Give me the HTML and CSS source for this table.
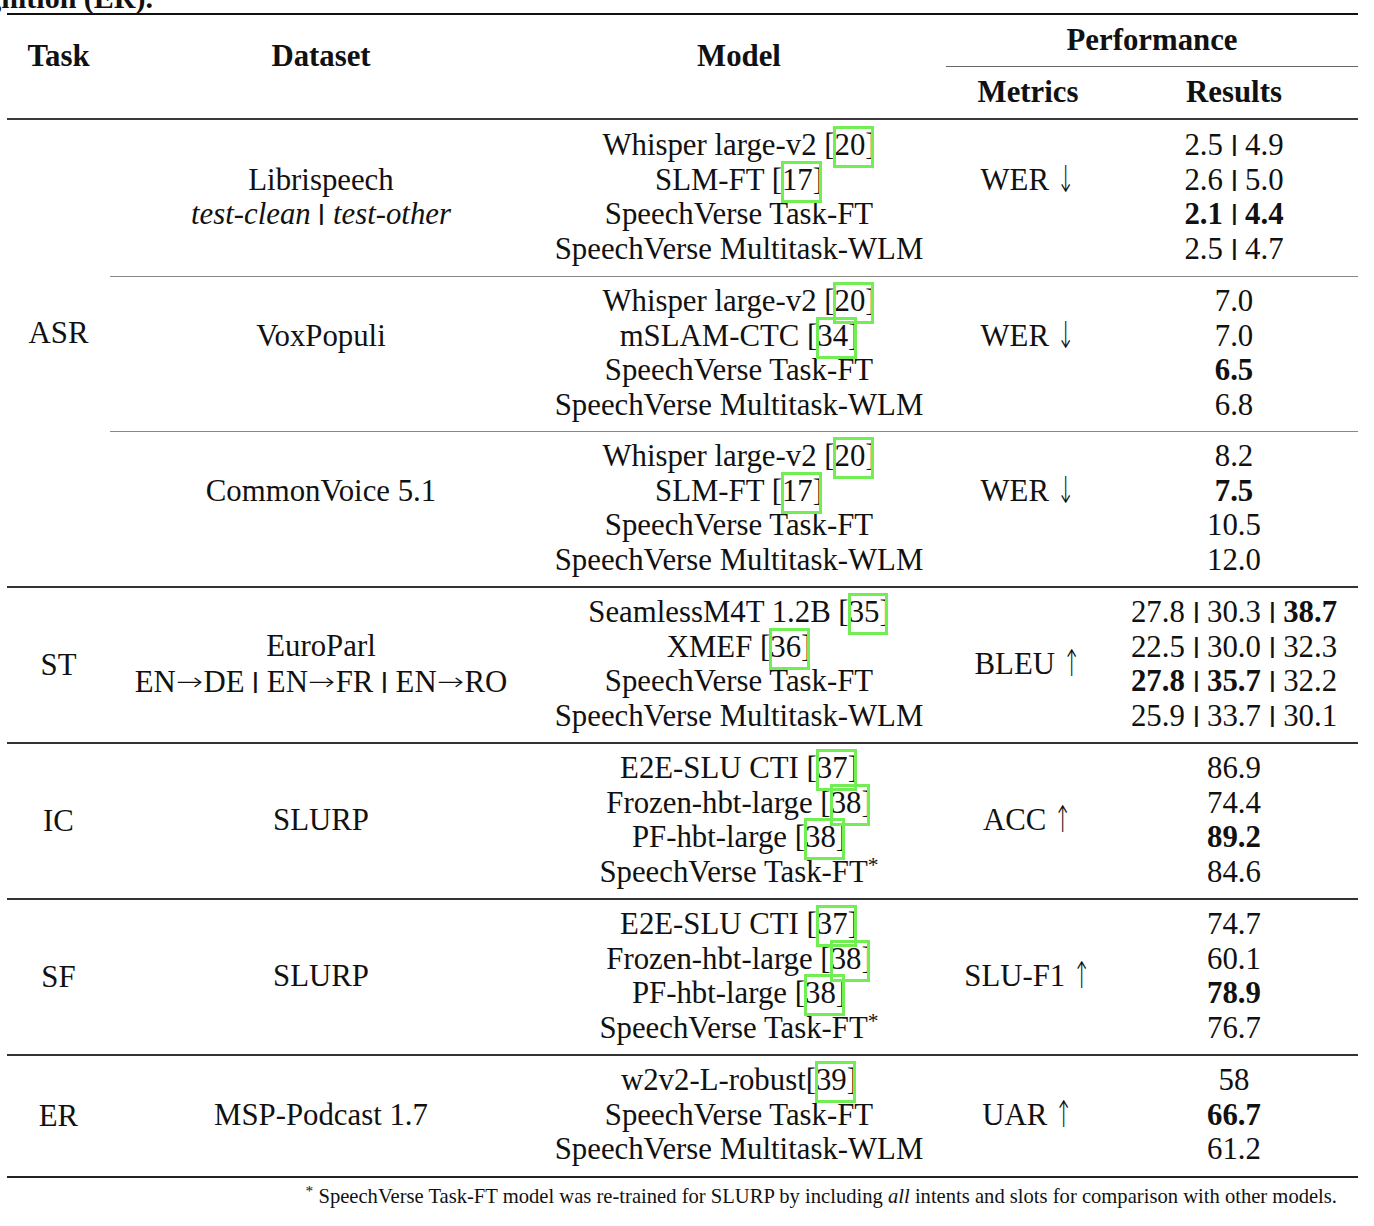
FILE: index.html
```html
<!DOCTYPE html>
<html lang="en">
<head>
<meta charset="utf-8">
<title>SpeechVerse results table</title>
<link rel="stylesheet" href="styles.css">
</head>
<body>
<div class="caption-clip"><div class="caption">Emotion Recognition (ER).</div></div>
<div class="tbl">
  <div class="hdr">
    <div class="h-task">Task</div>
    <div class="h-ds">Dataset</div>
    <div class="h-mdl">Model</div>
    <div class="h-perf">
      <div class="perf-top">Performance</div>
      <div class="perf-sub">
        <div class="h-met">Metrics</div>
        <div class="h-res">Results</div>
      </div>
    </div>
  </div>

  <div class="sec sec-first">
    <div class="task task-asr">ASR</div>
    <div class="groups">
      <div class="grp grp-first">
        <div class="ds"><div>Librispeech<br><i>test-clean</i> <span class="sep">|</span> <i>test-other</i></div></div>
        <div class="mdl">
          <div>Whisper large-v2 [<span class="cite">20</span>]</div>
          <div>SLM-FT [<span class="cite">17</span>]</div>
          <div>SpeechVerse Task-FT</div>
          <div>SpeechVerse Multitask-WLM</div>
        </div>
        <div class="met lift"><div>WER <span class="arr">↓</span></div></div>
        <div class="res">
          <div>2.5 <span class="sep">|</span> 4.9</div>
          <div>2.6 <span class="sep">|</span> 5.0</div>
          <div><b>2.1</b> <span class="sep">|</span> <b>4.4</b></div>
          <div>2.5 <span class="sep">|</span> 4.7</div>
        </div>
      </div>
      <div class="grp cmid">
        <div class="ds lift"><div>VoxPopuli</div></div>
        <div class="mdl">
          <div>Whisper large-v2 [<span class="cite">20</span>]</div>
          <div>mSLAM-CTC [<span class="cite">34</span>]</div>
          <div>SpeechVerse Task-FT</div>
          <div>SpeechVerse Multitask-WLM</div>
        </div>
        <div class="met lift"><div>WER <span class="arr">↓</span></div></div>
        <div class="res">
          <div>7.0</div>
          <div>7.0</div>
          <div><b>6.5</b></div>
          <div>6.8</div>
        </div>
      </div>
      <div class="grp cmid">
        <div class="ds lift"><div>CommonVoice 5.1</div></div>
        <div class="mdl">
          <div>Whisper large-v2 [<span class="cite">20</span>]</div>
          <div>SLM-FT [<span class="cite">17</span>]</div>
          <div>SpeechVerse Task-FT</div>
          <div>SpeechVerse Multitask-WLM</div>
        </div>
        <div class="met lift"><div>WER <span class="arr">↓</span></div></div>
        <div class="res">
          <div>8.2</div>
          <div><b>7.5</b></div>
          <div>10.5</div>
          <div>12.0</div>
        </div>
      </div>
    </div>
  </div>

  <div class="sec">
    <div class="task">ST</div>
    <div class="groups">
      <div class="grp">
        <div class="ds"><div>EuroParl<br>EN<span class="arr arr-h">→</span>DE <span class="sep">|</span> EN<span class="arr arr-h">→</span>FR <span class="sep">|</span> EN<span class="arr arr-h">→</span>RO</div></div>
        <div class="mdl">
          <div>SeamlessM4T 1.2B [<span class="cite">35</span>]</div>
          <div>XMEF [<span class="cite">36</span>]</div>
          <div>SpeechVerse Task-FT</div>
          <div>SpeechVerse Multitask-WLM</div>
        </div>
        <div class="met"><div>BLEU <span class="arr">↑</span></div></div>
        <div class="res">
          <div>27.8 <span class="sep">|</span> 30.3 <span class="sep">|</span> <b>38.7</b></div>
          <div>22.5 <span class="sep">|</span> 30.0 <span class="sep">|</span> 32.3</div>
          <div><b>27.8</b> <span class="sep">|</span> <b>35.7</b> <span class="sep">|</span> 32.2</div>
          <div>25.9 <span class="sep">|</span> 33.7 <span class="sep">|</span> 30.1</div>
        </div>
      </div>
    </div>
  </div>

  <div class="sec">
    <div class="task">IC</div>
    <div class="groups">
      <div class="grp">
        <div class="ds"><div>SLURP</div></div>
        <div class="mdl">
          <div>E2E-SLU CTI [<span class="cite">37</span>]</div>
          <div>Frozen-hbt-large [<span class="cite">38</span>]</div>
          <div>PF-hbt-large [<span class="cite">38</span>]</div>
          <div>SpeechVerse Task-FT<sup>*</sup></div>
        </div>
        <div class="met"><div>ACC <span class="arr">↑</span></div></div>
        <div class="res">
          <div>86.9</div>
          <div>74.4</div>
          <div><b>89.2</b></div>
          <div>84.6</div>
        </div>
      </div>
    </div>
  </div>

  <div class="sec">
    <div class="task">SF</div>
    <div class="groups">
      <div class="grp">
        <div class="ds"><div>SLURP</div></div>
        <div class="mdl">
          <div>E2E-SLU CTI [<span class="cite">37</span>]</div>
          <div>Frozen-hbt-large [<span class="cite">38</span>]</div>
          <div>PF-hbt-large [<span class="cite">38</span>]</div>
          <div>SpeechVerse Task-FT<sup>*</sup></div>
        </div>
        <div class="met"><div>SLU-F1 <span class="arr">↑</span></div></div>
        <div class="res">
          <div>74.7</div>
          <div>60.1</div>
          <div><b>78.9</b></div>
          <div>76.7</div>
        </div>
      </div>
    </div>
  </div>

  <div class="sec">
    <div class="task">ER</div>
    <div class="groups">
      <div class="grp">
        <div class="ds"><div>MSP-Podcast 1.7</div></div>
        <div class="mdl">
          <div>w2v2-L-robust[<span class="cite">39</span>]</div>
          <div>SpeechVerse Task-FT</div>
          <div>SpeechVerse Multitask-WLM</div>
        </div>
        <div class="met"><div>UAR <span class="arr">↑</span></div></div>
        <div class="res">
          <div>58</div>
          <div><b>66.7</b></div>
          <div>61.2</div>
        </div>
      </div>
    </div>
  </div>
</div>
<p class="foot"><sup>*</sup> SpeechVerse Task-FT model was re-trained for SLURP by including <i>all</i> intents and slots for comparison with other models.</p>
</body>
</html>
```

FILE: styles.css
```css
html, body {
  margin: 0;
  padding: 0;
  background: #fff;
}

body {
  font-family: "Liberation Serif", "Times New Roman", "DejaVu Serif", serif;
  font-size: 30.8px;
  color: #111;
  width: 1374px;
}

.caption-clip {
  height: 13px;
  width: 153px;
  overflow: hidden;
  display: flex;
  justify-content: flex-end;
  align-items: flex-start;
}

.caption {
  white-space: nowrap;
  font-weight: bold;
  font-size: 30px;
  line-height: 30px;
  margin-top: -17px;
  flex: none;
}

.tbl {
  margin-left: 7px;
  width: 1351px;
  border-top: 2px solid #111;
  border-bottom: 2px solid #222;
  line-height: 34.5px;
}

/* header */
.hdr {
  display: flex;
  height: 103px;
  font-weight: bold;
}

.h-task,
.h-ds,
.h-mdl {
  text-align: center;
  padding-top: 24px;
}

.h-task { width: 103px; }
.h-ds { width: 422px; }
.h-mdl { width: 414px; }

.h-perf {
  width: 412px;
  display: flex;
  flex-direction: column;
}

.perf-top {
  padding-top: 8px;
  height: 43px;
  text-align: center;
  border-bottom: 1px solid #666;
}

.perf-sub {
  display: flex;
  padding-top: 8px;
}

.h-met { width: 164px; text-align: center; }
.h-res { width: 248px; text-align: center; }

/* body sections */
.sec {
  display: flex;
  border-top: 2px solid #333;
}

.sec-first {
  border-top-color: #3a3a3a;
}

.task {
  width: 103px;
  flex: none;
  display: flex;
  align-items: center;
  justify-content: center;
}

.task-asr {
  padding-bottom: 40px;
}

.groups {
  flex: 1;
  display: flex;
  flex-direction: column;
}

.grp {
  display: flex;
  padding: 7px 0 9px;
}

.grp-first {
  padding: 8px 0 10px;
}

.grp.cmid {
  border-top: 1px solid #888;
}

.ds {
  width: 422px;
  flex: none;
  display: flex;
  flex-direction: column;
  justify-content: center;
  text-align: center;
  white-space: nowrap;
}

.mdl {
  width: 414px;
  flex: none;
  text-align: center;
  white-space: nowrap;
}

.met {
  width: 164px;
  flex: none;
  display: flex;
  align-items: center;
  justify-content: center;
  white-space: nowrap;
}

.res {
  width: 248px;
  flex: none;
  text-align: center;
  white-space: nowrap;
}

.lift {
  padding-bottom: 34.5px;
}

.sep {
  display: inline-block;
  font-weight: bold;
  transform: scale(1.15, 0.75);
  transform-origin: 50% 12px;
}

.arr {
  font-family: "DejaVu Sans", sans-serif;
  font-weight: 200;
  display: inline-block;
  transform: scale(0.7, 1.2);
  margin: 0 -3px 0 -4px;
}

.arr-h {
  transform: scale(1.05, 0.8);
  margin: 0 1px;
}

.cite {
  position: relative;
}

.cite::after {
  content: "";
  position: absolute;
  left: -1px;
  right: -9px;
  top: -2px;
  bottom: -6px;
  border: 3px solid #72ee55;
}

sup {
  font-size: 0.7em;
  line-height: 0;
  vertical-align: 0.45em;
}

.foot {
  margin: 6px 0 0;
  width: 1337px;
  text-align: right;
  font-size: 20.6px;
  line-height: 24px;
}

.foot sup {
  font-size: 0.75em;
}
```
